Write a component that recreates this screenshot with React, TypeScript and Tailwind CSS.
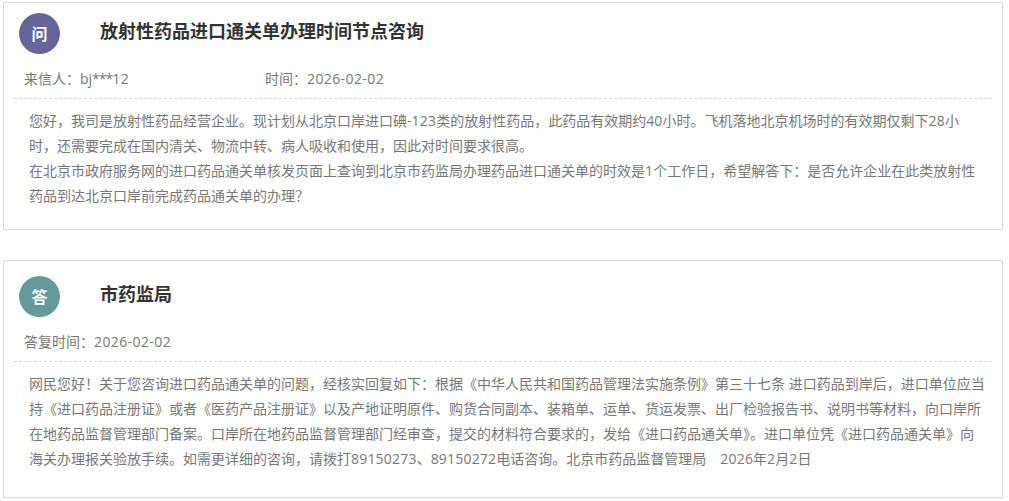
import React from "react";

const font = { fontFamily: '"Open Sans", "Noto Sans CJK SC", sans-serif' };

// digits run a little wider in the reference than in the fallback latin face
function Digits({ text }: { text: string }) {
  return (
    <>
      {text.split(/(\d+)/).map((part, i) =>
        /^\d+$/.test(part) ? (
          <span key={i} className="tracking-[0.2px]">{part}</span>
        ) : (
          part
        )
      )}
    </>
  );
}

function Card({
  badge,
  badgeColor,
  title,
  meta,
  lines,
  className,
}: {
  badge: string;
  badgeColor: string;
  title: string;
  meta: React.ReactNode;
  lines: string[];
  className: string;
}) {
  return (
    <div className={`w-[1000px] border border-[#d9d9d9] bg-white ${className}`}>
      <div className="flex items-start pl-[15px]">
        <div className={`mt-[10px] flex h-[41px] w-[41px] items-center justify-center rounded-full text-[16px] font-bold text-white ${badgeColor}`}>
          {badge}
        </div>
        <h2 className="ml-[40px] mt-[10px] text-[18px] font-bold leading-[36px] text-[#333]">{title}</h2>
      </div>
      <div className="mt-[10px] flex pl-[20px] text-[14px] leading-[30px] text-[#777]">{meta}</div>
      <div className="mx-[10px] mt-[4px] border-t border-dashed border-[#d9d9d9] pl-[15px] pt-[9px] text-[14px] leading-[25px] text-[#777]">
        {lines.map((l) => (
          <p key={l} className="whitespace-nowrap">
            <Digits text={l} />
          </p>
        ))}
      </div>
    </div>
  );
}

export default function App() {
  return (
    <div className="min-h-screen bg-white pl-[3px] pt-[2px]" style={font}>
      <Card
        className="mb-[30px] h-[228px]"
        badge="问"
        badgeColor="bg-[#65659a]"
        title="放射性药品进口通关单办理时间节点咨询"
        meta={
          <>
            <span className="w-[241px]">
              来信人：bj<span className="tracking-[-1px]">***</span>
              <span className="tracking-[0.4px]">12</span>
            </span>
            <span>
              时间：<span className="tracking-[0.4px]">2026-02-02</span>
            </span>
          </>
        }
        lines={[
          "您好，我司是放射性药品经营企业。现计划从北京口岸进口碘-123类的放射性药品，此药品有效期约40小时。飞机落地北京机场时的有效期仅剩下28小",
          "时，还需要完成在国内清关、物流中转、病人吸收和使用，因此对时间要求很高。",
          "在北京市政府服务网的进口药品通关单核发页面上查询到北京市药监局办理药品进口通关单的时效是1个工作日，希望解答下：是否允许企业在此类放射性",
          "药品到达北京口岸前完成药品通关单的办理？",
        ]}
      />
      <Card
        className="h-[238px] pt-[5px]"
        badge="答"
        badgeColor="bg-[#659a9a]"
        title="市药监局"
        meta={
          <span>
            答复时间：<span className="tracking-[0.4px]">2026-02-02</span>
          </span>
        }
        lines={[
          "网民您好！关于您咨询进口药品通关单的问题，经核实回复如下：根据《中华人民共和国药品管理法实施条例》第三十七条 进口药品到岸后，进口单位应当",
          "持《进口药品注册证》或者《医药产品注册证》以及产地证明原件、购货合同副本、装箱单、运单、货运发票、出厂检验报告书、说明书等材料，向口岸所",
          "在地药品监督管理部门备案。口岸所在地药品监督管理部门经审查，提交的材料符合要求的，发给《进口药品通关单》。进口单位凭《进口药品通关单》向",
          "海关办理报关验放手续。如需更详细的咨询，请拨打89150273、89150272电话咨询。北京市药品监督管理局　2026年2月2日",
        ]}
      />
    </div>
  );
}
